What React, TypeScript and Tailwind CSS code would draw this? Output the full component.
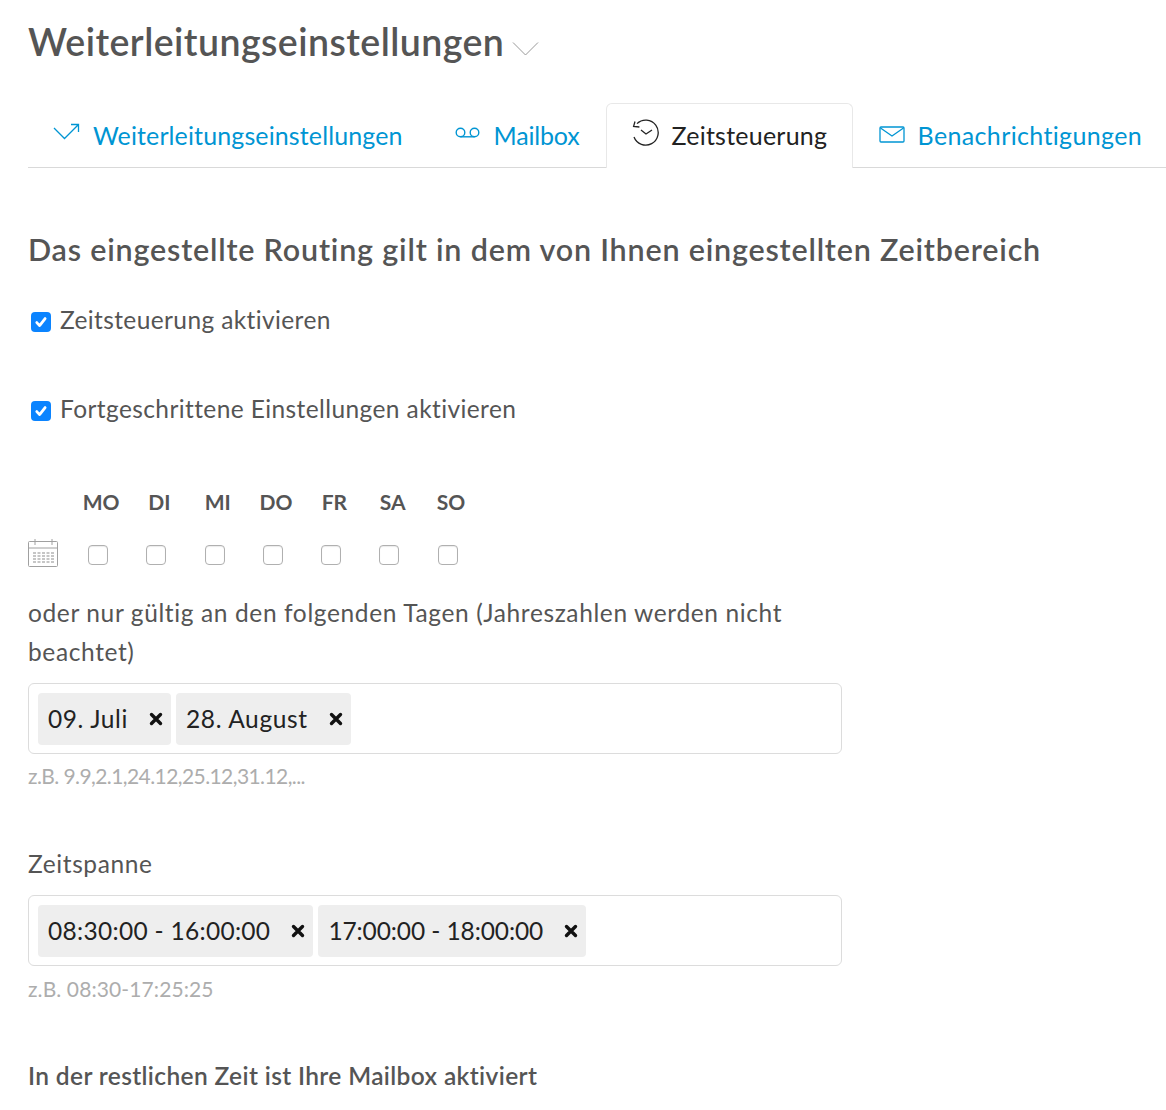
import React from 'react';

// Wochentage
const DAYS = ['MO', 'DI', 'MI', 'DO', 'FR', 'SA', 'SO'];

function CheckedBox() {
  return (
    <span className="mt-[4px] flex h-[20px] w-[20px] shrink-0 items-center justify-center rounded-[4px] bg-[#0b84ff]">
      <svg width="14" height="14" viewBox="0 0 14 14" fill="none" stroke="#fff" strokeWidth="2.8" strokeLinecap="round" strokeLinejoin="round">
        <path d="M2.8 7.6l2.8 3 5.5-7" />
      </svg>
    </span>
  );
}

function EmptyBox() {
  return <span className="block h-[20px] w-[20px] rounded-[4px] border border-[#b0b0b0] bg-white shadow-[inset_0_1px_1px_rgba(0,0,0,0.08)]" />;
}

function Chip({ label, className }: { label: string; className: string }) {
  return (
    <span className="flex h-[52px] items-center gap-[21px] rounded-[4px] bg-[#eeeeee] pl-[10px] pr-[8px] text-[24.5px] text-[#222]">
      <span className={`pt-[1px] ${className}`}>{label}</span>
      <svg width="14" height="14" viewBox="0 0 14 14" stroke="#111" strokeWidth="3.4" strokeLinecap="round">
        <path d="M2.5 2.5l9 9M11.5 2.5l-9 9" />
      </svg>
    </span>
  );
}

function Tab({ icon, label, className }: { icon: React.ReactNode; label: string; className: string }) {
  return (
    <a className="flex h-[64px] items-center text-[#0095d3]">
      {icon}
      <span className={`pt-[1px] ${className}`}>{label}</span>
    </a>
  );
}

export default function App() {
  return (
    <div className="h-[1110px] w-[1166px] overflow-hidden bg-white pl-[28px] font-['Lato','Liberation_Sans',sans-serif] text-[#555555] [font-variant-ligatures:none]">
      {/* Titel */}
      <div className="flex h-[103px] items-start pt-[18px]">
        <h1 className="text-[37.5px] leading-[48px] font-semibold tracking-[0.45px]">Weiterleitungseinstellungen</h1>
        <svg className="ml-[8px] mt-[23px]" width="27" height="16" viewBox="0 0 27 16" fill="none" stroke="#9a9a9a" strokeWidth="1">
          <path d="M1 1.5l12.5 12.5L26 1.5" />
        </svg>
      </div>

      {/* Tabs */}
      <div className="flex h-[65px] items-start border-b border-[#d9d9d9] pl-[25px] text-[25px]">
        <Tab
          label="Weiterleitungseinstellungen"
          className="tracking-[0.12px]"
          icon={
            <svg className="mr-[13px] mb-[6px]" width="27" height="18" viewBox="0 0 27 18" fill="none" stroke="#0095d3" strokeWidth="1.3">
              <path d="M1 5l10.5 10.5L25.5 1.5M18 1.5h7.5v7.5" />
            </svg>
          }
        />
        <div className="ml-[52px]">
          <Tab
            label="Mailbox"
            className="tracking-[-0.18px]"
            icon={
              <svg className="mr-[14px] mb-[4px]" width="25" height="12" viewBox="0 0 25 12" fill="none" stroke="#0095d3" strokeWidth="1.4">
                <circle cx="5.5" cy="5.5" r="4.3" />
                <circle cx="19.5" cy="5.5" r="4.3" />
                <path d="M5.5 9.8h14" />
              </svg>
            }
          />
        </div>
        <div className="relative ml-[26px] flex h-[65px] w-[247px] items-center rounded-t-[6px] border border-b-0 border-[#e8e8e8] bg-white pl-[25px] text-[#222] shadow-[0_1px_0_#fff]">
          <svg className="mr-[12px] mb-[7px]" width="28" height="28" viewBox="0 0 28 28" fill="none" stroke="#222" strokeWidth="1.3">
            <path d="M5 4.6A12.5 12.5 0 1 1 2 18" />
            <path d="M3 2.5L1.6 7.4l5.8.6" />
            <path d="M9 11l5 4 6-4" />
          </svg>
          <span className="tracking-[0.23px]">Zeitsteuerung</span>
        </div>
        <div className="ml-[26px]">
          <Tab
            label="Benachrichtigungen"
            className="tracking-[0.36px]"
            icon={
              <svg className="mr-[13px] mb-[2px]" width="26" height="17" viewBox="0 0 26 17" fill="none" stroke="#0095d3" strokeWidth="1.3">
                <rect x="1" y="1" width="24" height="15" rx="1" />
                <path d="M1.5 2l11.5 8 11.5-8" />
              </svg>
            }
          />
        </div>
      </div>

      {/* Überschrift */}
      <h2 className="mt-[61px] text-[30.5px] leading-[40px] font-semibold tracking-[0.8px]">Das eingestellte Routing gilt in dem von Ihnen eingestellten Zeitbereich</h2>

      <label className="mt-[31px] flex h-[40px] items-center pl-[3px] text-[24.5px]">
        <CheckedBox />
        <span className="ml-[9px] tracking-[0.38px]">Zeitsteuerung aktivieren</span>
      </label>
      <label className="mt-[49px] flex h-[40px] items-center pl-[3px] text-[24.5px]">
        <CheckedBox />
        <span className="ml-[9px] tracking-[0.4px]">Fortgeschrittene Einstellungen aktivieren</span>
      </label>

      {/* Wochentage */}
      <div className="mt-[53px] flex h-[40px] items-center pl-[44px] text-[21px] font-bold">
        {DAYS.map((day) => (
          <span key={day} className="w-[58.3px] text-center">{day}</span>
        ))}
      </div>
      <div className="mt-[13px] flex h-[40px] items-center">
        <svg className="mb-[3px]" width="31" height="29" viewBox="0 0 31 29" fill="none" stroke="#a0a0a0" strokeWidth="1">
          <rect x="0.5" y="2.5" width="29" height="25" rx="1" />
          <path d="M0.5 9h29M7 0v6M24 0v6" />
          <path d="M5 14h21M5 17h21M5 20h21M5 23h21" strokeDasharray="3 1.5" strokeWidth="1.5" stroke="#b4b4b4" />
        </svg>
        <div className="ml-[29px] flex">
          {DAYS.map((day) => (
            <span key={day} className="w-[58.3px]"><EmptyBox /></span>
          ))}
        </div>
      </div>

      <p className="mt-[18px] w-[814px] text-[24.5px] leading-[39px] tracking-[0.62px]">oder nur gültig an den folgenden Tagen (Jahreszahlen werden nicht beachtet)</p>

      <div className="mt-[12px] flex h-[71px] w-[814px] items-center gap-[5px] rounded-[6px] border border-[#dcdcdc] pl-[9px]">
        <Chip label="09. Juli" className="tracking-[0.6px]" />
        <Chip label="28. August" className="tracking-[0.65px]" />
      </div>
      <p className="mt-[7px] text-[21px] leading-[30px] tracking-[-0.58px] text-[#adadad]">z.B. 9.9,2.1,24.12,25.12,31.12,...</p>

      <p className="mt-[53px] text-[24.5px] leading-[40px] tracking-[0.6px]">Zeitspanne</p>
      <div className="mt-[11px] flex h-[71px] w-[814px] items-center gap-[5px] rounded-[6px] border border-[#dcdcdc] pl-[9px]">
        <Chip label="08:30:00 - 16:00:00" className="tracking-[0.3px]" />
        <Chip label="17:00:00 - 18:00:00" className="tracking-[-0.1px]" />
      </div>
      <p className="mt-[8px] text-[21px] leading-[30px] tracking-[0.1px] text-[#adadad]">z.B. 08:30-17:25:25</p>

      <p className="mt-[52px] text-[24.5px] leading-[40px] font-semibold tracking-[0.37px]">In der restlichen Zeit ist Ihre Mailbox aktiviert</p>
    </div>
  );
}
